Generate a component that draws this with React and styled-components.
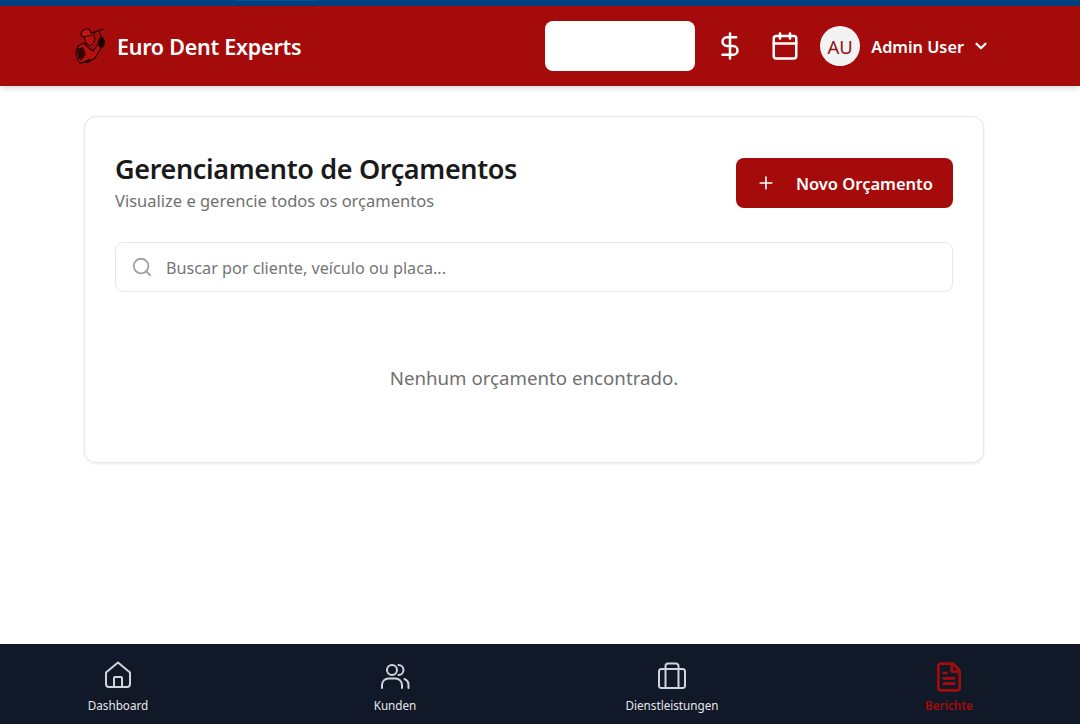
import React from "react";
import styled, { createGlobalStyle } from "styled-components";
import { DollarSign, Calendar, ChevronDown, Plus, Search, FileText } from "lucide-react";

const GlobalStyle = createGlobalStyle`
  html, body {
    margin: 0;
    padding: 0;
    background: #ffffff;
    font-family: "Noto Sans", "Open Sans", sans-serif;
  }
  * {
    box-sizing: border-box;
  }
`;

// worker with cap and polishing tool
function LogoIcon() {
  return (
    <svg width="32" height="36" viewBox="0 0 32 36" fill="none" stroke="#1c0505" strokeLinejoin="round">
      <path d="M9 15 3 18 1 25l1 6 3 4 8-1 7-4 6-10-3-4-5 7-4-3z" fill="#b80f0f" strokeWidth="1.200" />
      <path d="M9 8l9-2 2 4-1 4-4 4-4-3z" fill="#b80f0f" strokeWidth="1" />
      <path d="M6 7c0-4 3-6 6-6 2 0 4 2 4 4l4-1-2 3-10 2z" fill="#c91212" strokeWidth="1.200" />
      <path d="M16 5 29 1M24 3l3 8" strokeWidth="1.100" strokeLinecap="round" />
      <path d="M24 10l4-1 2 4-1 6-4 1-2-5z" fill="#1c0505" stroke="none" />
      <path d="M2 21l6-2 3 7-5 7-3-3z" fill="#1c0505" stroke="none" opacity="0.85" />
      <path d="M5 35l9-4 3 1-5 3z" fill="#1c0505" stroke="none" />
    </svg>
  );
}

function HomeIcon() {
  return (
    <svg width="28" height="28" viewBox="0 0 28 28" fill="none" stroke="currentColor" strokeWidth="2" strokeLinecap="round" strokeLinejoin="round">
      <path d="M2 11.500 14 1.500l12 10v11.500a3 3 0 0 1-3 3H5a3 3 0 0 1-3-3z" />
      <path d="M10 26v-9a1 1 0 0 1 1-1h6a1 1 0 0 1 1 1v9" />
    </svg>
  );
}

function UsersIcon() {
  return (
    <svg width="30" height="28" viewBox="0 0 30 28" fill="none" stroke="currentColor" strokeWidth="2" strokeLinecap="round" strokeLinejoin="round">
      <circle cx="12" cy="9" r="5" />
      <path d="M2 27v-3a6.500 6.500 0 0 1 6.500-6.500h7a6.500 6.500 0 0 1 6.500 6.500v3" />
      <path d="M18.500 4a5 5 0 0 1 0 10" />
      <path d="M28.500 27v-3a6.500 6.500 0 0 0-4-6" />
    </svg>
  );
}

function CaseIcon() {
  return (
    <svg width="30" height="28" viewBox="0 0 30 28" fill="none" stroke="currentColor" strokeWidth="2" strokeLinecap="round" strokeLinejoin="round">
      <rect x="2" y="8" width="26" height="19" rx="2.500" />
      <path d="M8.500 8V5a2.500 2.500 0 0 1 2.500-2.500h8A2.500 2.500 0 0 1 21.500 5v3" />
      <path d="M8.500 8v19M21.500 8v19" />
    </svg>
  );
}

const navItems = [
  { label: "Dashboard", icon: <HomeIcon /> },
  { label: "Kunden", icon: <UsersIcon /> },
  { label: "Dienstleistungen", icon: <CaseIcon /> },
  { label: "Berichte", icon: <FileText size={32} strokeWidth={2} />, active: true },
];

export default function App() {
  return (
    <Page>
      <GlobalStyle />
      <TopStrip>
        <StripTab />
      </TopStrip>
      <Header>
        <Brand>
          <LogoIcon />
          <BrandName>Euro Dent Experts</BrandName>
        </Brand>
        <HeaderActions>
          <BlankField />
          <HeaderIcon $gap={20}>
            <DollarSign size={30} strokeWidth={2} />
          </HeaderIcon>
          <HeaderIcon $gap={25}>
            <Calendar size={30} strokeWidth={2} />
          </HeaderIcon>
          <Avatar>AU</Avatar>
          <UserName>Admin User</UserName>
          <ChevronDown size={18} strokeWidth={3} color="#ffffff" />
        </HeaderActions>
      </Header>
      <Main>
        <Card>
          <CardTop>
            <div>
              <Title>Gerenciamento de Orçamentos</Title>
              <Subtitle>Visualize e gerencie todos os orçamentos</Subtitle>
            </div>
            <PrimaryButton>
              <Plus size={20} strokeWidth={2} />
              Novo Orçamento
            </PrimaryButton>
          </CardTop>
          <SearchBox>
            <Search size={22} strokeWidth={2} color="#9ca3af" />
            <SearchInput placeholder="Buscar por cliente, veículo ou placa..." />
          </SearchBox>
          <EmptyText>Nenhum orçamento encontrado.</EmptyText>
        </Card>
      </Main>
      <BottomNav>
        {navItems.map((item) => (
          <NavItem key={item.label} $active={item.active}>
            <NavIcon>{item.icon}</NavIcon>
            <NavLabel $active={item.active}>{item.label}</NavLabel>
          </NavItem>
        ))}
      </BottomNav>
    </Page>
  );
}

const Page = styled.div`
  display: flex;
  flex-direction: column;
  height: 100vh;
  overflow: hidden;
`;

const TopStrip = styled.div`
  height: 6px;
  flex-shrink: 0;
  background: #004080;
  padding-left: 235px;
`;

const StripTab = styled.div`
  width: 83px;
  height: 1px;
  background: #0a4f96;
`;

const Header = styled.header`
  height: 80px;
  flex-shrink: 0;
  display: flex;
  align-items: center;
  justify-content: space-between;
  padding: 0 90px 0 75px;
  background: #a50b0b;
  box-shadow: 0 4px 6px -1px rgba(0, 0, 0, 0.1), 0 2px 4px -2px rgba(0, 0, 0, 0.1);
  position: relative;
  z-index: 1;
`;

const Brand = styled.div`
  display: flex;
  align-items: center;
  gap: 10px;
`;

const BrandName = styled.span`
  padding-top: 1px;
  color: #ffffff;
  font-size: 21.500px;
  font-weight: 600;
  letter-spacing: -0.25px;
`;

const HeaderActions = styled.div`
  display: flex;
  align-items: center;
`;

const BlankField = styled.div`
  width: 150px;
  height: 50px;
  background: #ffffff;
  border-radius: 8px;
`;

const HeaderIcon = styled.div`
  display: flex;
  color: #ffffff;
  margin-left: ${(p) => p.$gap}px;
`;

const Avatar = styled.div`
  width: 40px;
  height: 40px;
  margin-left: 20px;
  border-radius: 50%;
  background: #f3f3f3;
  color: #8f1414;
  display: flex;
  align-items: center;
  justify-content: center;
  font-size: 18.500px;
`;

const UserName = styled.span`
  margin: 0 8px 0 11px;
  padding-top: 2px;
  color: #ffffff;
  font-size: 16.300px;
  font-weight: 600;
  white-space: nowrap;
`;

const Main = styled.main`
  flex: 1;
  padding: 30px 96px 0 84px;
`;

const Card = styled.section`
  height: 347px;
  padding: 30px;
  background: #ffffff;
  border: 1px solid #e5e7eb;
  border-radius: 12px;
  box-shadow: 0 1px 3px rgba(0, 0, 0, 0.08);
`;

const CardTop = styled.div`
  display: flex;
  align-items: flex-start;
  justify-content: space-between;
  margin-bottom: 31px;
`;

const Title = styled.h1`
  margin: 0;
  color: #1a1a1a;
  font-size: 27px;
  font-weight: 600;
  line-height: 44px;
  letter-spacing: -0.35px;
`;

const Subtitle = styled.p`
  margin: 0;
  color: #707070;
  font-size: 16.500px;
  line-height: 20px;
`;

const PrimaryButton = styled.button`
  width: 217px;
  height: 50px;
  margin-top: 11px;
  display: flex;
  align-items: center;
  gap: 20px;
  padding: 0 20px;
  border: none;
  border-radius: 8px;
  background: #a50b0b;
  color: #ffffff;
  font: 600 16.500px "Noto Sans", sans-serif;
  white-space: nowrap;
`;

const SearchBox = styled.div`
  height: 50px;
  display: flex;
  align-items: center;
  gap: 13px;
  padding: 0 15px;
  border: 1px solid #e5e7eb;
  border-radius: 8px;
`;

const SearchInput = styled.input`
  flex: 1;
  border: none;
  outline: none;
  padding: 2px 0 0;
  font: 16.200px "Noto Sans", sans-serif;
  &::placeholder {
    color: #757575;
  }
`;

const EmptyText = styled.p`
  margin: 72px 0 0;
  text-align: center;
  color: #707070;
  font-size: 18.700px;
  line-height: 28px;
`;

const BottomNav = styled.nav`
  height: 80px;
  flex-shrink: 0;
  display: grid;
  grid-template-columns: repeat(4, 200px);
  column-gap: 77px;
  padding-left: 18px;
  background: #111827;
`;

const NavItem = styled.div`
  display: flex;
  flex-direction: column;
  align-items: center;
  padding-top: 17px;
  gap: 4px;
  color: ${(p) => (p.$active ? "#a50b0b" : "#d1d5db")};
`;

const NavIcon = styled.div`
  height: 32px;
  display: flex;
  align-items: flex-start;
`;

const NavLabel = styled.span`
  font-size: 11.700px;
  line-height: 16px;
  font-weight: ${(p) => (p.$active ? 600 : 400)};
  color: ${(p) => (p.$active ? "#a50b0b" : "#e5e7eb")};
`;
